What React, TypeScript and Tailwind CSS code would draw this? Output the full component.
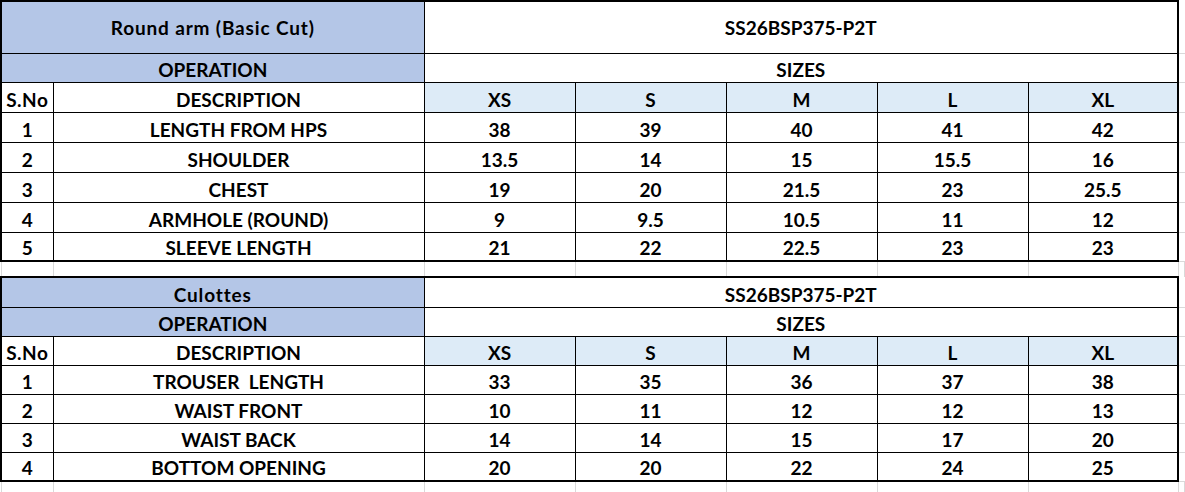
import React from "react";

// Feuille de mesures : deux blocs façon Excel, colonnes alignées sur une seule grille.

type Row = { no: string; desc: string; values: string[] };

const SIZES = ["XS", "S", "M", "L", "XL"];

const ROUND_ARM: Row[] = [
  { no: "1", desc: "LENGTH FROM HPS", values: ["38", "39", "40", "41", "42"] },
  { no: "2", desc: "SHOULDER", values: ["13.5", "14", "15", "15.5", "16"] },
  { no: "3", desc: "CHEST", values: ["19", "20", "21.5", "23", "25.5"] },
  { no: "4", desc: "ARMHOLE (ROUND)", values: ["9", "9.5", "10.5", "11", "12"] },
  { no: "5", desc: "SLEEVE LENGTH", values: ["21", "22", "22.5", "23", "23"] },
];

const CULOTTES: Row[] = [
  { no: "1", desc: "TROUSER  LENGTH", values: ["33", "35", "36", "37", "38"] },
  { no: "2", desc: "WAIST FRONT", values: ["10", "11", "12", "12", "13"] },
  { no: "3", desc: "WAIST BACK", values: ["14", "14", "15", "17", "20"] },
  { no: "4", desc: "BOTTOM OPENING", values: ["20", "20", "22", "24", "25"] },
];

const CELL = "border border-black p-0 text-center align-bottom pb-[3px] leading-none";
const TRAIL = "border-0 border-b border-b-[#d9d9d9] p-0";
const GAP = "border-0 border-x border-x-[#d9d9d9] p-0";

function TrailCell() {
  return <td className={TRAIL} />;
}

function GapRow({ h }: { h: string }) {
  return (
    <tr className={h}>
      {Array.from({ length: 8 }).map((_, i) => (
        <td key={i} className={GAP} />
      ))}
    </tr>
  );
}

interface BlockProps {
  title: string;
  code: string;
  rows: Row[];
  titleH: string;
  opH: string;
  headH: string;
  rowH: string;
  lastH: string;
  titleMiddle?: boolean;
}

function Block({ title, code, rows, titleH, opH, headH, rowH, lastH, titleMiddle }: BlockProps) {
  const titleAlign = titleMiddle ? "align-middle pb-0 pt-[3px]" : "";
  return (
    <>
      <tr className={titleH}>
        <td
          colSpan={2}
          className={`${CELL} ${titleAlign} tracking-[0.85px] border-l-2 border-t-2 bg-[#b4c6e7]`}
        >
          {title}
        </td>
        <td colSpan={5} className={`${CELL} ${titleAlign} border-r-2 border-t-2`}>
          {code}
        </td>
        <TrailCell />
      </tr>
      <tr className={opH}>
        <td colSpan={2} className={`${CELL} border-l-2 bg-[#b4c6e7]`}>
          OPERATION
        </td>
        <td colSpan={5} className={`${CELL} border-r-2`}>
          SIZES
        </td>
        <TrailCell />
      </tr>
      <tr className={headH}>
        <td className={`${CELL} tracking-[0.5px] border-l-2`}>S.No</td>
        <td className={CELL}>DESCRIPTION</td>
        {SIZES.map((s, i) => (
          <td key={s} className={`${CELL} bg-[#ddebf7] ${i === 4 ? "border-r-2" : ""}`}>
            {s}
          </td>
        ))}
        <TrailCell />
      </tr>
      {rows.map((r, ri) => {
        const last = ri === rows.length - 1;
        return (
          <tr key={r.no} className={last ? lastH : rowH}>
            <td className={`${CELL} border-l-2 ${last ? "border-b-2" : ""}`}>{r.no}</td>
            <td className={`${CELL} whitespace-pre ${last ? "border-b-2" : ""}`}>{r.desc}</td>
            {r.values.map((v, i) => (
              <td
                key={i}
                className={`${CELL} ${i === 4 ? "border-r-2" : ""} ${last ? "border-b-2" : ""}`}
              >
                {v}
              </td>
            ))}
            <TrailCell />
          </tr>
        );
      })}
    </>
  );
}

export default function App() {
  return (
    <div
      className="w-[1185px] h-[492px] overflow-hidden bg-white text-black font-bold text-[19px]"
      style={{ fontFamily: "Lato, 'Open Sans', sans-serif" }}
    >
      <table className="table-fixed border-collapse w-[1185px]">
        <colgroup>
          <col className="w-[52px]" />
          <col className="w-[371px]" />
          <col className="w-[151px]" />
          <col className="w-[151px]" />
          <col className="w-[151px]" />
          <col className="w-[151px]" />
          <col className="w-[150px]" />
          <col />
        </colgroup>
        <tbody>
          <Block
            title="Round arm (Basic Cut)"
            code="SS26BSP375-P2T"
            rows={ROUND_ARM}
            titleH="h-[52px]"
            opH="h-[29px]"
            headH="h-[30px]"
            rowH="h-[30px]"
            lastH="h-[29px]"
            titleMiddle
          />
          <GapRow h="h-[16px]" />
          <Block
            title="Culottes"
            code="SS26BSP375-P2T"
            rows={CULOTTES}
            titleH="h-[30px]"
            opH="h-[29px]"
            headH="h-[29px]"
            rowH="h-[29px]"
            lastH="h-[29px]"
          />
          <GapRow h="h-[20px]" />
        </tbody>
      </table>
    </div>
  );
}
